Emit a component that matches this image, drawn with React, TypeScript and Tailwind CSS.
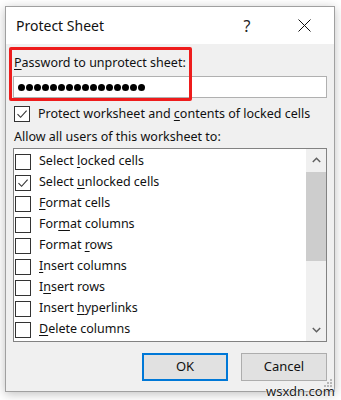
import React from 'react';

const font = { fontFamily: '"Noto Sans", "Open Sans", Arial, sans-serif' };

// label text with an underlined access key
const Label: React.FC<{ text: string; k: number }> = ({ text, k }) => (
  <span>
    {text.slice(0, k)}
    <span className="underline underline-offset-2">{text[k]}</span>
    {text.slice(k + 1)}
  </span>
);

const Check: React.FC<{ checked?: boolean }> = ({ checked }) => (
  <div className="w-[16px] h-[16px] shrink-0 border border-[#333] bg-white flex items-center justify-center">
    {checked && (
      <svg width="12" height="12" viewBox="0 0 12 12">
        <path d="M1.5 6.2 L4.6 9.3 L10.6 2.6" fill="none" stroke="#333" strokeWidth="1.1" />
      </svg>
    )}
  </div>
);

const items: { text: string; k: number; checked?: boolean }[] = [
  { text: 'Select locked cells', k: 7 },
  { text: 'Select unlocked cells', k: 7, checked: true },
  { text: 'Format cells', k: 0 },
  { text: 'Format columns', k: 3 },
  { text: 'Format rows', k: 7 },
  { text: 'Insert columns', k: 0 },
  { text: 'Insert rows', k: 1 },
  { text: 'Insert hyperlinks', k: 7 },
  { text: 'Delete columns', k: 0 },
];

export default function App() {
  return (
    <div className="w-[341px] h-[400px] bg-white relative overflow-hidden pl-[5px] pt-[6px]" style={font}>
      <div className="w-[330px] h-[386px] border border-[#a0a0a0] bg-[#f0f0f0] shadow-[0_2px_10px_rgba(0,0,0,0.25)] flex flex-col relative">
        {/* title bar */}
        <div className="h-[37px] bg-white flex items-center shrink-0">
          <span className="ml-[10px] text-[14px] text-[#111]">Protect Sheet</span>
          <span className="ml-auto w-[14px] text-center text-[16px] text-[#222] mr-[44px]">?</span>
          <svg width="13" height="13" viewBox="0 0 13 13" className="mr-[23px]">
            <path d="M0.5 0.5 L12.5 12.5 M12.5 0.5 L0.5 12.5" stroke="#111" strokeWidth="1" />
          </svg>
        </div>

        <div className="px-[7px] flex flex-col text-[12.5px] text-[#111]">
          <div className="pt-[10px] pl-[1px] h-[28px] leading-[18px]">
            <Label text="Password to unprotect sheet:" k={0} />
          </div>
          <div className="mt-[4px] h-[22px] bg-white border border-[#b0b0b0] flex items-center gap-[1px] pl-[4px]">
            {Array.from({ length: 16 }).map((_, i) => (
              <span key={i} className="w-[7px] h-[7px] rounded-full bg-black" />
            ))}
          </div>
          <div className="mt-[7px] h-[18px] flex items-center gap-[8px] pl-[1px]">
            <Check checked />
            <Label text="Protect worksheet and contents of locked cells" k={22} />
          </div>
          <div className="mt-[5px] h-[18px] leading-[18px] pl-[1px]">Allow all users of this worksheet to:</div>

          {/* list box */}
          <div className="mt-[2px] h-[194px] bg-white border border-[#828282] flex">
            <div className="flex-1 pt-[2px] pl-[1px] overflow-hidden">
              {items.map((it) => (
                <div key={it.text} className="h-[21px] flex items-center gap-[8px]">
                  <Check checked={it.checked} />
                  <Label text={it.text} k={it.k} />
                </div>
              ))}
            </div>
            <div className="w-[20px] bg-[#f0f0f0] flex flex-col">
              <div className="h-[22px] flex items-center justify-center">
                <svg width="9" height="6" viewBox="0 0 9 6">
                  <path d="M0.8 5 L4.5 1.3 L8.2 5" fill="none" stroke="#606060" strokeWidth="1.5" />
                </svg>
              </div>
              <div className="h-[89px] bg-[#cdcdcd] mt-[1px]" />
              <div className="flex-1" />
              <div className="h-[22px] flex items-center justify-center">
                <svg width="9" height="6" viewBox="0 0 9 6">
                  <path d="M0.8 1 L4.5 4.7 L8.2 1" fill="none" stroke="#606060" strokeWidth="1.5" />
                </svg>
              </div>
            </div>
          </div>

          {/* buttons */}
          <div className="mt-[11px] flex justify-end gap-[13px]">
            <button className="w-[86px] h-[28px] bg-[#e1e1e1] border-2 border-[#0078d7] text-[13px] text-[#111]">OK</button>
            <button className="w-[86px] h-[28px] bg-[#e1e1e1] border border-[#adadad] text-[13px] text-[#111]">Cancel</button>
          </div>
        </div>

        {/* size grip */}
        <svg width="9" height="9" viewBox="0 0 9 9" className="absolute right-[1px] bottom-[3px]">
          <rect x="6" y="0" width="2" height="2" fill="#b8b8b8" />
          <rect x="3" y="3" width="2" height="2" fill="#b8b8b8" />
          <rect x="6" y="3" width="2" height="2" fill="#b8b8b8" />
          <rect x="0" y="6" width="2" height="2" fill="#b8b8b8" />
          <rect x="3" y="6" width="2" height="2" fill="#b8b8b8" />
          <rect x="6" y="6" width="2" height="2" fill="#b8b8b8" />
        </svg>
      </div>

      {/* annotation */}
      <div className="absolute left-[9px] top-[47px] w-[183px] h-[54px] border-[3px] border-[#ee1c1c] rounded-[2px]" />

      {/* watermark */}
      <div className="absolute left-[266px] top-[382px] text-[13px] text-[#222] [text-shadow:0_0_2px_white,0_0_2px_white]">
        wsxdn.com
      </div>
    </div>
  );
}
